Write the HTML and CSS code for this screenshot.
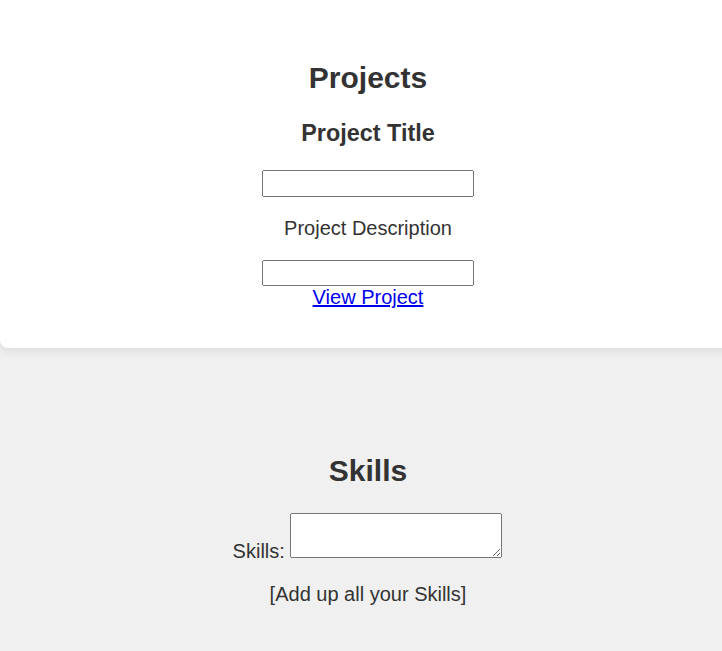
FILE: index.html
```html
<!DOCTYPE html>
<html lang="en">
<head>
<meta charset="utf-8">
<title>Portfolio</title>
<link rel="stylesheet" href="styles.css">
</head>
<body>
<section class="card projects">
  <h2>Projects</h2>
  <h3>Project Title</h3>
  <input class="field" type="text">
  <p>Project Description</p>
  <input class="field" type="text">
  <a href="#">View Project</a>
</section>
<section class="skills">
  <h2>Skills</h2>
  <div class="skill-row">
    <label for="skills">Skills:</label> <textarea id="skills" class="area"></textarea>
  </div>
  <p>[Add up all your Skills]</p>
</section>
</body>
</html>
```
FILE: styles.css
```css
html, body {
  overflow-x: hidden;
}
body {
  margin: 0;
  background: #f0f0f0;
  color: #333;
  font-family: "Liberation Sans", Arial, sans-serif;
  font-size: 20px;
}
section {
  width: 100%;
  padding: 0 7px;
  text-align: center;
}
.card {
  background: #fff;
  border-radius: 0 0 8px 8px;
  box-shadow: 0 2px 10px rgba(0, 0, 0, 0.1);
  padding-top: 36px;
  padding-bottom: 39px;
  display: flow-root;
}
h2 {
  font-size: 30px;
  margin: 25px 0;
}
h3 {
  font-size: 23.4px;
  margin: 23.4px 0;
}
p {
  margin: 20px 0;
}
.field {
  display: block;
  box-sizing: border-box;
  width: 212px;
  height: 27px;
  margin: 0 auto;
}
.projects .field:last-of-type {
  height: 26px;
}
a {
  color: #0000ee;
}
.skills {
  padding-top: 81px;
  display: flow-root;
}
.skill-row {
  line-height: 23px;
  padding-right: 1px;
}
.area {
  box-sizing: border-box;
  width: 212px;
  height: 45px;
  vertical-align: baseline;
  margin: 0;
}
```
